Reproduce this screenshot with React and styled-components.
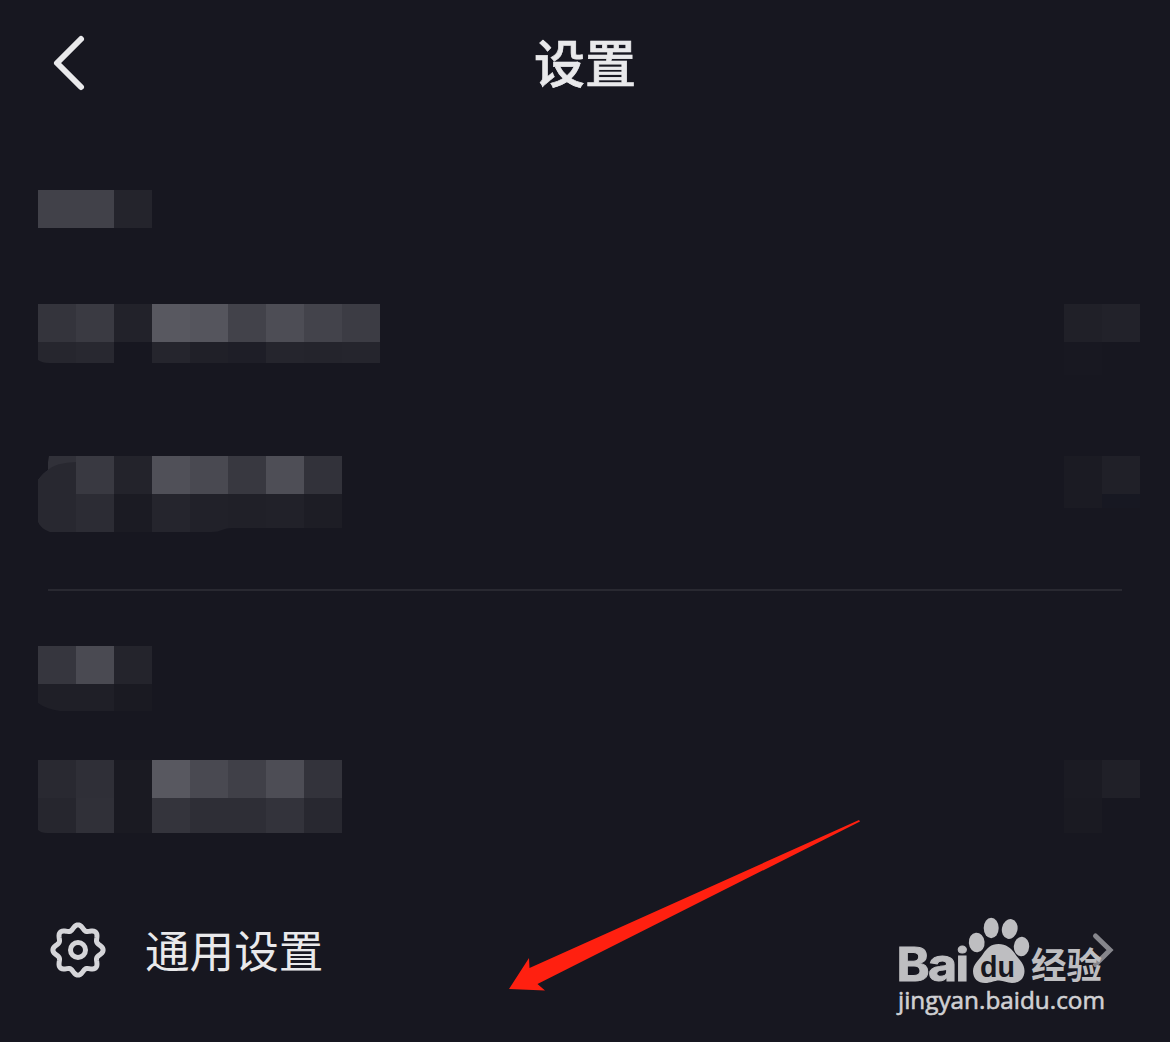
import React, {Fragment} from 'react';
import styled, {createGlobalStyle} from 'styled-components';

const GlobalStyle = createGlobalStyle`
    body {
        margin: 0;
        background: #171720;
    }
`;

const Page = styled.div`
    position: relative;
    width: 1170px;
    height: 1042px;
    overflow: hidden;
    background: #171720;
    color: #e9e9eb;
    font-family: 'Noto Sans CJK SC', sans-serif;
`;

const Header = styled.header`
    display: grid;
    grid-template-columns: 120px 1fr 120px;
    align-items: center;
    height: 126px;
    margin-bottom: 64px;

    h1 {
        margin: 0 0 4px;
        text-align: center;
        font-size: 51px;
        line-height: 74px;
        font-weight: 500;
        -webkit-text-stroke: 0.7px currentColor;
    }
`;

const BackButton = styled.button`
    border: 0;
    padding: 0 0 0 50px;
    background: none;
    color: inherit;
    text-align: left;

    svg {
        display: block;
    }
`;

const Row = styled.div`
    display: flex;
    justify-content: space-between;
    align-items: flex-start;
    height: ${props => props.$height}px;
    padding: 0 30px 0 38px;
`;

const Mosaic = styled.div`
    display: grid;
    grid-template-columns: repeat(${props => props.$cols}, 38px);
    grid-template-rows: 38px ${props => props.$tail || 0}px;
    clip-path: ${props => props.$clip || 'none'};
`;

const Cell = styled.span`
    background: ${props => props.$color};
`;

const BrushedCell = styled.span`
    background: #313139;

    &::before {
        content: '';
        display: block;
        height: 100%;
        background: #282830;
        clip-path: path('M0 38V24Q9 12 20 8.500Q29 6 38 6V38Z');
    }
`;

const Divider = styled.hr`
    height: 2px;
    margin: 0 48px 55px;
    border: 0;
    background: #292931;
`;

const SettingRow = styled.div`
    display: flex;
    align-items: center;
    height: 120px;
    padding: 0 55px 0 48px;

    p {
        flex: 1;
        margin: 0 0 3px 37px;
        font-size: 44.600px;
        line-height: 64px;
        font-weight: 400;
    }
`;

const Arrow = styled.svg`
    position: absolute;
    left: 500px;
    top: 810px;
`;

const Watermark = styled.svg`
    position: absolute;
    left: 890px;
    top: 910px;
`;

const rows = {
    account: {
        cols: 3,
        cells: ['#414149', '#414149', '#24242c'],
    },
    first: {
        cols: 9,
        tail: 21,
        clip: "path('M0 0H342V59H11Q4 59 0 56Z')",
        cells: [
            '#34343c', '#3a3a42', '#22222a', '#585860', '#55555d', '#42424a', '#4d4d55', '#43434b', '#3c3c44',
            '#26262e', '#282830', '#171720', '#25252d', '#202028', '#1e1e27', '#25252d', '#24242c', '#25252d',
        ],
    },
    second: {
        cols: 8,
        tail: 38,
        clip: "path('M11 0H304V72H195Q188 72 184 74Q180 76 174 76H12Q3 73 0 66V24Q5 17 10 14V6Z')",
        cells: [
            'brush', '#393941', '#23232b', '#505058', '#494951', '#383840', '#4e4e56', '#32323a',
            '#282830', '#2c2c34', '#1b1b23', '#25252d', '#212129', '#202028', '#212129', '#1d1d25',
        ],
    },
    general: {
        cols: 3,
        tail: 27,
        clip: "path('M0 0H114V65H22Q8 63 0 57Z')",
        cells: ['#36363e', '#4a4a52', '#24242c', '#1f1f27', '#1f1f27', '#1a1a22'],
    },
    third: {
        cols: 8,
        tail: 35,
        clip: "path('M0 0H304V73H9Q3 73 0 70Z')",
        cells: [
            '#292931', '#2f2f37', '#1a1a22', '#585860', '#494951', '#404048', '#4d4d55', '#33333b',
            '#26262e', '#303038', '#1a1a22', '#34343c', '#2e2e36', '#2e2e36', '#33333b', '#282830',
        ],
    },
};

// wavy outline with eight teeth around (30, 30)
const gearPath = Array.from({length: 144}, (_, i) => {
    const angle = (i / 144) * Math.PI * 2;
    const radius = 22.7 + 2.4 * Math.cos(angle * 8);
    const x = 30 + radius * Math.cos(angle);
    const y = 30 + radius * Math.sin(angle);
    return `${i ? 'L' : 'M'}${x.toFixed(2)} ${y.toFixed(2)}`;
}).join('') + 'Z';

function Pixels ({cols, tail, clip, cells}) {
    return (
        <Mosaic $cols={cols} $tail={tail} $clip={clip}>
            {cells.map((color, i) => (
                color === 'brush' ? <BrushedCell key={i} /> : <Cell key={i} $color={color} />
            ))}
        </Mosaic>
    );
}

function BaiduMark () {
    return (
        <Watermark width="230" height="115" viewBox="0 0 230 115" fill="#bebec1">
            <text x="6.500" y="71" fontFamily="Inter, sans-serif" fontWeight="700" fontSize="46" textLength="71" lengthAdjust="spacingAndGlyphs" letterSpacing="-1.500" stroke="#bebec1" strokeWidth="1">Bai</text>
            <ellipse cx="86.700" cy="32.500" rx="7.900" ry="9.800" transform="rotate(-5 86.700 32.500)" />
            <ellipse cx="101.200" cy="18" rx="7.500" ry="10.200" />
            <ellipse cx="119.700" cy="19" rx="7.800" ry="10" transform="rotate(12 119.700 19)" />
            <ellipse cx="131.500" cy="36.500" rx="7.700" ry="9.800" transform="rotate(4 131.500 36.500)" />
            <path d="M108.500 34C116 34 121 38 124.500 43C128 49 134.500 53 134.500 61C134.500 69 129 73 122 73C117 73 114 70.500 109 70.500C104 70.500 101 73 95 73C88 73 83 69 83 61C83 54 89 50 93 44C97 38 101 34 108.500 34Z" />
            <text x="90" y="66.500" fill="#171720" fontFamily="'Liberation Sans', sans-serif" fontWeight="700" fontSize="29.500" textLength="35" lengthAdjust="spacingAndGlyphs">du</text>
            <text x="141" y="68.500" fontFamily="'Noto Sans CJK SC', sans-serif" fontWeight="700" fontSize="36" textLength="71" lengthAdjust="spacingAndGlyphs">经验</text>
            <text x="8" y="99" fill="#d0d0d3" stroke="#d0d0d3" strokeWidth="0.600" fontFamily="'Open Sans', sans-serif" fontWeight="500" fontSize="24.500" textLength="207" lengthAdjust="spacingAndGlyphs">jingyan.baidu.com</text>
        </Watermark>
    );
}

function App () {
    return (
        <Fragment>
            <GlobalStyle />
            <Page>
                <Header>
                    <BackButton aria-label="back">
                        <svg width="40" height="60" viewBox="0 0 40 60" fill="none" stroke="currentColor" strokeWidth="6" strokeLinecap="round" strokeLinejoin="round">
                            <path d="M31 6L7 30L31 54" />
                        </svg>
                    </BackButton>
                    <h1>设置</h1>
                </Header>
                <Row $height={114}>
                    <Pixels {...rows.account} />
                </Row>
                <Row $height={152}>
                    <Pixels {...rows.first} />
                    <Pixels cols={2} tail={33} cells={['#202028', '#22222a', '#181821', '#171720']} />
                </Row>
                <Row $height={133}>
                    <Pixels {...rows.second} />
                    <Pixels cols={2} tail={14} cells={['#1b1b23', '#202028', '#1b1b23', '#171822']} />
                </Row>
                <Divider />
                <Row $height={114}>
                    <Pixels {...rows.general} />
                </Row>
                <Row $height={130}>
                    <Pixels {...rows.third} />
                    <Pixels cols={2} tail={35} cells={['#1b1b23', '#202028', '#1a1a22', '#171720']} />
                </Row>
                <SettingRow>
                    <svg width="60" height="60" viewBox="0 0 60 60" fill="none" stroke="#d5d5d9" strokeWidth="5" strokeLinejoin="round">
                        <path d={gearPath} />
                        <circle cx="30" cy="30" r="7.500" />
                    </svg>
                    <p>通用设置</p>
                    <svg width="24" height="40" viewBox="0 0 24 40" fill="none" stroke="#86868c" strokeWidth="5" strokeLinecap="round">
                        <path d="M4.500 6L19 20L4.500 34.500" />
                    </svg>
                </SettingRow>
                <Arrow width="370" height="190" viewBox="0 0 370 190" fill="#ff2010">
                    <path d="M9 179L29 148L29.500 158L359 10L360 11.500L37.500 174L45 180.500Z" />
                </Arrow>
                <BaiduMark />
            </Page>
        </Fragment>
    );
}

export default App;
